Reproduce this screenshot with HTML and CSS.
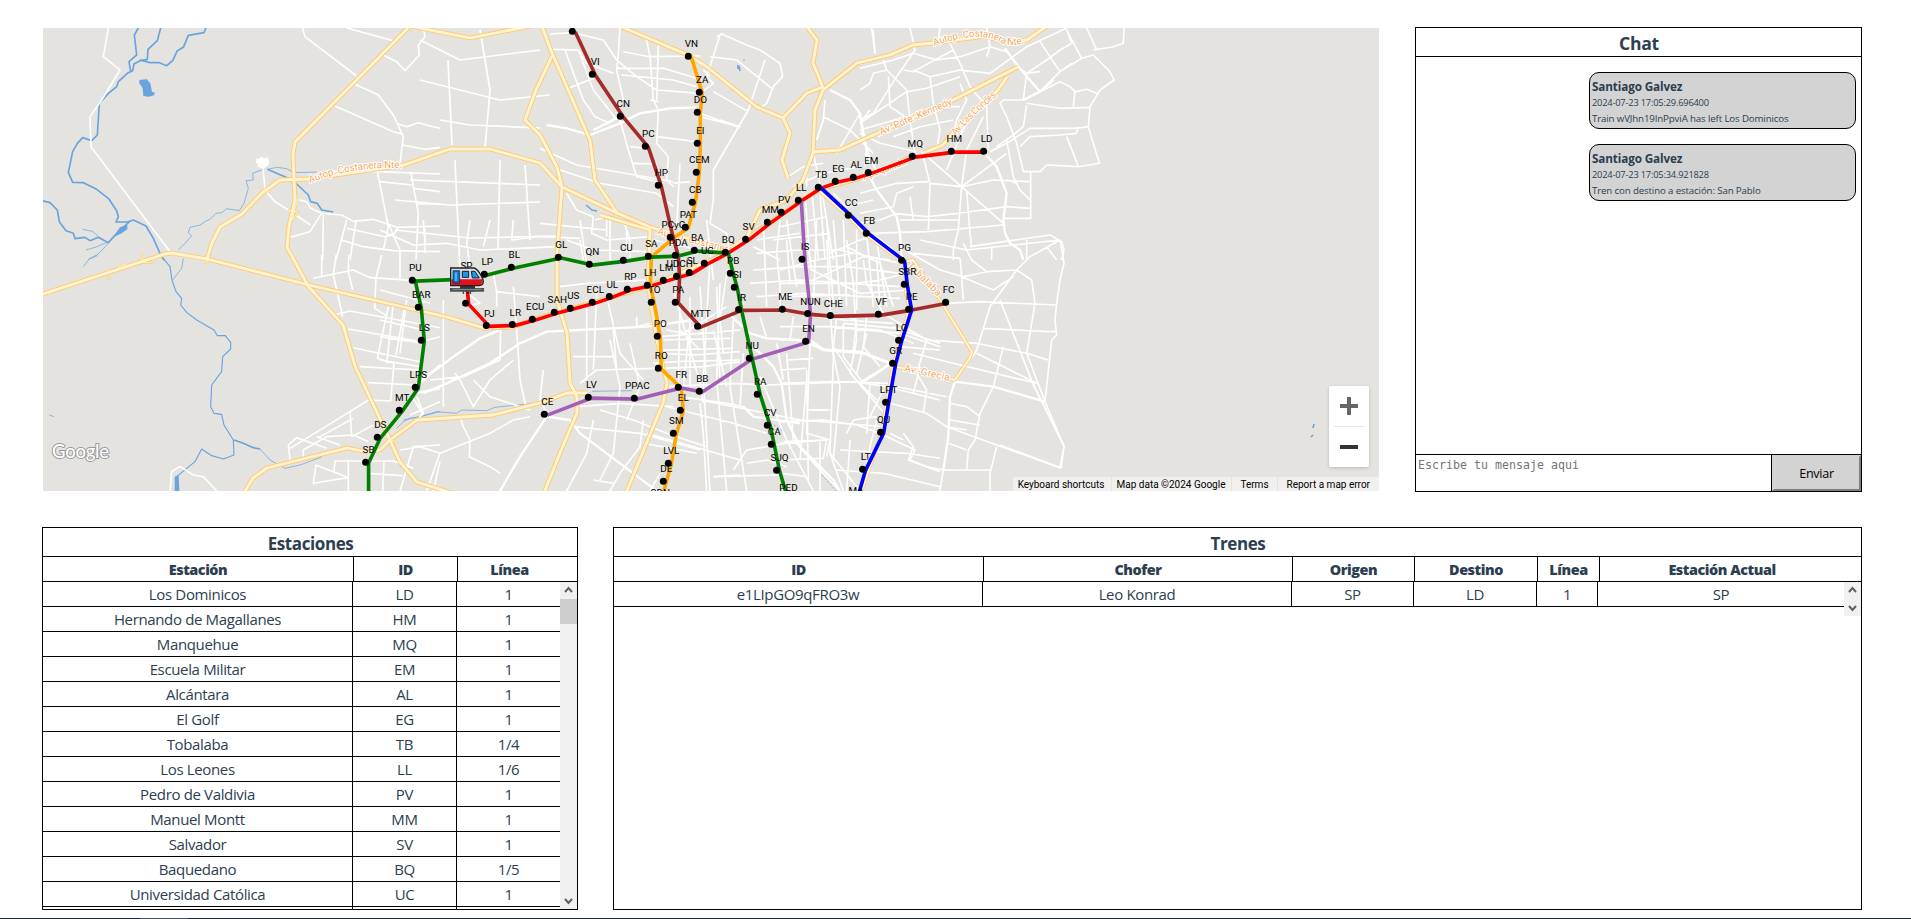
FILE: index.html
```html
<!DOCTYPE html>
<html lang="es">
<head>
<meta charset="utf-8">
<title>Metro</title>
<link rel="stylesheet" href="styles.css">
</head>
<body>
<main class="dashboard">
  <section class="top">
    <div class="map">
      <svg class="map-canvas" viewBox="43 28 1336 463" width="1336" height="463">
        <g class="water">
          <g transform="translate(40 20) scale(.33333)">
            <path class="w5" d="M295 24L283 45L290 105L267 125L272 155M362 24L352 62L324 88L322 118L300 122L282 132L278 152L262 160L235 185L230 200L205 220L178 250L172 345L155 362L128 353L112 370L98 395L85 457L98 487L130 488L170 508L205 535L230 572L235 590L228 606L262 606L280 600L318 618L340 655L362 705L372 720M498 24L492 38L445 46L430 82L412 92L398 122L380 137L358 128L330 128L300 120"/>
            <path class="w5" d="M0 540L30 548L52 570L58 605L78 632L100 640L105 656L135 652L150 662L175 652L205 668L235 635L268 606"/>
            <path d="M298 180L320 178L331 190L336 215L345 218L342 226L326 230L310 228L308 205L298 190ZM228 640L240 622L262 614L262 628L245 640L220 652Z" class="lake"/>
            <path class="w2" d="M128 628L158 634L175 650M138 690L165 682L200 668M145 718L175 702L205 670M682 448L710 442L740 446L762 458L830 456M670 448L638 460L640 480L618 482L625 505L612 550L598 572L560 566L545 578L528 580L510 598L500 602L478 616L450 622L445 638L455 648L435 670L415 690"/>
            <path class="w5" d="M682 448L745 475L770 492L805 525L812 545L832 550L845 570L880 576"/>
          </g>
          <g transform="translate(40 255) scale(.33333)">
            <path class="w4" d="M370 10L390 35L396 75L408 110L425 130L422 150L440 172L470 195L500 212L522 225L532 242L556 242L572 262L572 282L548 305L545 350L515 390L512 455L522 475L545 478L552 510L580 555L582 600L550 612L515 602L485 582L465 620L440 640L410 665"/>
            <path d="M404 665L416 660L418 708L404 708Z" class="lake"/>
            <path class="w5" d="M582 555L610 565L640 578L660 582"/>
            <path class="w2" d="M660 582L690 615L735 640L780 630L845 606M430 10L425 40L398 75M130 35L148 12L172 2M1070 520L1090 500L1110 490L1140 485L1200 470M28 480L42 485"/>
          </g>
          <g transform="translate(380 220) scale(.33333)">
            <path class="w2" d="M70 600L120 590L170 575L230 580L245 570L320 572L345 562L480 548M636 514L755 512"/>
          </g>
          <path class="w1" d="M774 425L784 432M822 475L836 491M744 59V61"/>
          <path class="speck" d="M1313 428L1314 424M1311 437L1313 435M738 65V69M739 66L740 71M586 205L592 210L597 211"/>
        </g>

        <g class="roads">
          <g transform="translate(40 20) scale(.33333)">
            <path d="M205 24L190 110L240 150L185 240L150 290L153 380L390 695M788 24L795 50L950 168M920 24L1060 62M1030 105L1070 125L1095 152L1138 105L1135 75L1155 50L1150 24M945 193L1015 225L1060 285L1090 350L1080 430M885 258L1060 335L1085 342M1075 312L1100 320L1135 308L1170 318L1200 325M1088 375L1155 388L1200 382M668 430L675 510L705 545L745 570L812 615"/>
            <path d="M860 455L1010 455L1200 462M1012 455L1045 620L1030 690M1112 455L1135 580L1128 720M1020 485L1115 495M1120 505L1200 515M1130 552L1200 552M770 538L800 545L812 565L845 580L810 635L750 652M845 580L905 585L940 604L1000 598L1070 622L1200 618M920 625L1035 650L1060 645L1075 622M905 660L970 680L1060 692L1200 695M920 600L888 720M948 604L930 720M850 585L848 720M1155 625V700"/>
            <path class="blob" d="M650 418L660 418L664 412L672 418L682 415L686 424L682 434L670 444L654 438L657 429L650 427Z"/>
          </g>
          <g transform="translate(40 255) scale(.33333)">
            <path d="M820 70L940 45L990 68L1120 76M845 0V65M888 0L880 60L908 185M926 0L925 50L938 105M1025 0L1008 70L1004 160L1040 182M890 178L930 168L1200 218M925 222L1145 260L1200 245M940 278L1140 320M1045 155L1012 310L1062 325L1052 438L985 435L930 470L750 580M1092 165L1068 300M960 335L1140 345M985 383L1125 390M930 470L935 545L1000 510M835 548L940 490M830 545L900 570M750 615L745 570L770 548L860 580M790 605V585L860 545L940 540L985 560M390 708L395 650L420 634L460 660L490 665L530 708M882 650L885 618L1060 618L1120 640M880 650L925 668L820 685L828 630L925 668M925 618V708M1032 618L1028 708M985 655L1088 662M1080 708L1120 575L1200 570M1180 708L1200 620M1120 430L1150 480M1110 480L1200 440"/>
            <path class="major" d="M1145 380L1200 330M1125 415L1200 400"/>
          </g>
          <g transform="translate(380 220) scale(.33333)">
            <path class="major" d="M100 500L220 410L300 355L360 330M130 520L200 490L330 430L420 370L500 335L800 320L940 300M360 813L420 710L500 590L570 600L600 640L800 790L830 813"/>
            <path d="M0 30L100 75L200 70L300 90L420 85L530 80M20 0L60 90V180M130 0L135 70M270 0L260 70L270 140M330 0L310 80M400 0L395 60L470 50L530 50M190 240V430L190 560M240 200L300 250L250 260M340 160L350 215L480 230M350 215V260M400 200L410 330L420 480L440 570M0 210L150 250M0 350L130 370M0 300L130 330M0 420L120 440M40 250L20 430M80 240L60 400M150 480L250 470L360 420L362 330M225 460L240 480L280 560L330 480L400 420M280 480L330 530L450 570M490 450L480 540L500 580M580 410L700 410M620 240V480M650 220L640 450M680 230L720 400L790 480M700 330L710 450M770 290V320L810 310M560 60L640 90L800 95M600 0L610 70L620 130M690 0V120M740 30V100M540 200L620 190L800 180M600 490L650 450L830 445M840 350L960 340L1080 330M850 400L940 405L1080 395M850 445L970 440L1080 425M590 560L720 550L880 560M110 530L130 580L110 600M240 590L250 620L270 660L268 710L330 740L360 760M60 690L120 680L180 700L140 813M180 700L330 640L400 600L450 590M580 620L780 640L960 690M640 600L620 700L560 813M790 600L780 680L720 760L690 813M960 550L970 640L980 813M880 210L960 490L970 550M900 330L960 390M1000 330L1040 500M980 0L1000 180M1040 160L1020 300L1030 400M930 230V500M960 200L980 500M1010 200L1020 490M640 780L700 790M1000 770L1080 765M800 640L1080 720M790 670L950 700"/>
          </g>
          <g transform="translate(540 20) scale(.33333)">
            <path class="major" d="M20 315L80 325L150 345L240 310L300 280L390 265L470 262M160 330L240 290M870 210L930 240L960 280L970 350L990 420L1010 450"/>
            <path d="M30 42L100 38L190 60L230 120L290 170L350 210L480 220M240 22L235 100L230 150L250 240M320 60L330 110L340 240L355 270L350 370L385 410L380 480L400 500M355 75L350 240M230 145L370 145L470 175M245 165L400 180L470 200M250 95L330 110L480 108M40 88L115 90L140 130L220 160M75 90L130 240L165 290L210 310M115 90L160 210L200 260L230 300M85 205L160 175M330 240L355 245M350 350L470 365M480 290L600 320L540 300M270 380L320 385M280 430L350 432M240 300L265 390L290 470L370 490M0 385L110 435L230 455L400 485M60 450L180 490L350 520L400 560M530 50L545 42L620 75L660 90L720 130L728 170L700 200L680 250L660 265M540 45L500 170L520 190L480 220M675 120L625 270L520 450V540L510 610L560 640L570 700M510 110L590 120L640 160L695 205M520 215L625 275M480 280L590 320M490 150L510 170M420 430L410 620M400 490L450 485M1000 30L1005 100M855 240L850 300L830 360M850 290L930 330L1000 400M960 280L890 400M990 270L960 310M1000 340L1020 350M160 590L155 640L200 660L330 650M200 590L165 600M200 600V650M10 650L120 655M0 610L150 625L200 630M120 660L130 720M80 520L110 570L160 590M250 600L270 660V720M340 660L480 690"/>
            <path d="M745 470L790 440L850 430M760 500L850 460L960 440M800 440V500M820 400L850 540L880 720M795 520L810 720M815 510L835 720M840 520L855 720M720 620L860 590M700 660L870 640M640 680L720 720M880 520L920 560L1000 540"/>
          </g>
          <g transform="translate(600 220) scale(.33333)">
            <path class="major" d="M385 280L450 340L500 355L600 360M600 360L650 380L670 390L790 400L870 430M870 430L830 460L790 485M460 380L520 440L545 490L560 600L600 680L700 780L720 813M430 560L460 590L600 610"/>
            <path d="M160 430L230 425L420 420M200 330L250 340L380 260M190 360L390 355M190 390L400 385M240 250L235 500M270 310L250 500M330 120L320 290L310 480L330 813M360 190L350 480L380 813M400 300L390 500L440 813M430 400L420 560M200 500L400 490L500 495L760 485L860 500M240 530L380 550L430 560M300 540L600 600L850 620M480 470L560 660L640 813M530 370L550 480M630 370L620 640L690 660L680 710M560 420L640 415M620 480L600 720M700 720L720 500L700 400M680 660L550 665M620 570H680M710 290L700 380L760 470L870 600M740 290L770 300L760 390M800 290L790 380L840 440M690 320L900 340L1020 380M650 290L730 300L880 310M480 290L500 355M580 290L570 360M540 280V200L530 100L540 0M560 0L590 200M490 0L500 260M470 60L600 40M470 100L600 90L720 90L900 130M460 150L600 140L740 140L900 160M450 190L600 180L740 190L900 200M470 230L610 220L900 235M650 0L640 260M680 0L700 250M700 0L720 250M730 0L740 260M770 0L770 270M800 40L820 260M830 60L860 260M690 100L780 60L840 40M740 80L840 130L880 260M400 750L440 690L560 670M340 770L540 765M440 730L500 720L560 740M200 560L400 610L500 640M0 570L100 600L200 640L320 680M30 360L60 500L40 700L0 780M90 370L120 500L80 600M150 813L180 760M860 500L1020 540M830 600L810 680L800 740L780 760M740 640L760 600L830 590M690 700L780 813M720 690L920 700L1020 715M810 590L850 510M910 640L940 680L925 720L1020 755M870 640L910 660M960 440L940 520M880 320L960 350L1020 370M900 380L1020 390"/>
          </g>
          <g transform="translate(860 20) scale(.33333)">
            <path class="major" d="M20 450L50 510L110 590L120 640L125 720M0 280L10 340L20 390L15 440M370 395L410 440L440 520L430 600L435 640L450 670L480 690L490 720M490 240L540 215L580 180M435 85L475 140L540 215"/>
            <path d="M0 145L100 120L160 100L230 120L300 110L390 80L440 95M35 24L45 100M150 24L165 90L110 170L40 280L0 300M240 24L235 60M160 150L210 170L300 150L390 160L500 80L620 24M0 210L30 190L40 160L80 150M70 120L80 150L140 210L150 300L165 400M85 170L90 260L150 300M130 150L160 155L280 90L300 130L330 200L380 260L385 390M210 170L220 250L240 330L230 390M0 310L140 215L200 205L300 170M0 330L240 260L300 260M100 350L180 320L280 300M0 340L60 370L170 395M300 190L320 240L290 300L280 340M280 90L270 70L290 50M380 24L390 80L380 110M540 65L600 155L635 130M500 160L560 120L600 90L635 70L620 30L665 115L700 105L750 155L762 180L720 210L690 260L685 320L718 430L655 440L560 435L540 455L490 455L470 370L440 290L420 250L430 240L490 240L500 160L475 140M500 160L540 155M665 115L600 155L540 215L600 185L630 200L645 215L640 260M500 250L600 265L690 262M645 215L680 208L715 222M500 255L490 320L460 345L410 380M685 320L650 325L510 325L440 370L390 395M480 380L510 350L600 345L650 340L655 320M620 350L640 400L655 440M680 24L710 90M700 90L760 80L790 70L792 24M370 290L320 390L305 500M260 450L300 350L340 270M185 390L210 490L205 630M190 400L305 500L440 400M210 490L305 500L400 480L510 485M305 500L430 610M305 500L295 630L280 690L280 720M320 510L330 640L335 680M0 520L110 490L205 485M0 580L100 560L110 520L160 500M100 580L200 590L295 580L440 560L510 565M120 600L300 600M25 640L200 635L430 615M435 595H512V455L490 455M440 360L460 470L480 510L510 540M440 480L470 490M150 530L160 600M0 610L60 600L110 580M330 680L570 645L605 665L612 690L605 720M395 680V720M0 660L50 650L100 690M500 660V720"/>
          </g>
          <g transform="translate(780 240) scale(.33333)">
            <path class="major" d="M525 425L510 470L505 590L490 690M525 425L640 440L795 485M90 300L130 328L240 335L335 370L245 425"/>
            <path d="M360 0L362 40M420 0L560 30L840 0M375 30L480 90L550 110L620 95L710 90L750 50L840 0M400 40L540 55L545 110L640 150L700 110M545 110L550 180M500 190L600 185L830 195M550 10L575 60L620 95M710 90L630 200L610 265L590 330L570 360M710 90L755 120L765 190L740 340M800 20L830 60M840 0L852 70L840 120L830 190L825 240L830 285L815 300L795 485L852 620L840 683L650 615L500 560M610 265L800 275L830 275M390 270L440 300L590 310L640 320L740 340L805 360M670 320L640 440L600 520L585 600L565 630L560 690M590 340L770 430M400 340L520 370L770 430M440 300L410 400L440 450L430 520M350 440L400 450L500 470M330 490L440 520L500 560L560 570M510 490L560 500L600 530M510 540L600 555M505 610L560 630M650 620L630 700V753M490 690L630 690M310 585L405 630L390 660L440 680L490 690L480 753M740 340L795 485M170 690L310 700L480 740M0 430L150 425L335 430M0 545L130 540L230 555L300 580M140 0L150 200L160 350L150 640L190 753M80 0L95 90L240 160L390 150M20 0L30 130L100 120L250 50L330 60M0 90L110 60L220 40M0 130L230 130L300 120L380 100M0 170L210 165M200 0L220 130L230 300L210 400L290 480M0 260L150 260L300 270L400 310M0 300L80 300M190 250V350L250 430M260 280L230 400M250 60L260 130L310 220L390 270M290 50L300 200M0 390L80 385M90 510H150M80 390L85 720M20 340L40 600L120 690L180 753M0 660L130 655L140 600L0 610M0 700L80 710M120 600V753M270 430L260 580M210 600L200 753M190 250L350 265"/>
          </g>
          <path d="M1000 300L1033 384L1064 446L1061 468L1000 445"/>
          <path d="M395 200L450 205L540 202M395 230L470 238L560 236M440 120L470 125L540 128M448 60L452 145M480 30L490 90L485 148M420 40L460 60L540 50M420 80L500 100L550 95M455 160L460 270M500 160L498 250M525 165L530 240M410 180L540 185"/>
        </g>

        <g class="highways" id="highways">
          <path d="M410 26L295 142L293 155L295 200L289 226L287 247L308 286L343 325L355 366L390 440L400 462L417 482L452 493"/>
          <path d="M40 295L165 254L172 253L207 259L313 286L447 317L484 328L513 327L532 320L647 287L725 254L798 203L818 190L868 176L912 157"/>
          <path d="M207 259L212 243L220 227L242 214L262 193L280 180L307 179L404 165L450 149L490 149L540 163L562 187L617 213L650 227L687 238L727 250L747 237L760 210L787 200L803 180L813 153L815 110L823 90L857 63L890 55L913 45L933 43L985 36L1007 43L1027 40L1047 26"/>
          <path d="M541 24L552 53L590 140L595 180L617 213M552 56L536 90L525 120L540 135L557 167L562 187L557 253L557 300L567 333L570 383L577 397L577 413L560 453L544 493M410 26L470 38L541 24"/>
          <path d="M244 493L253 478L267 468L347 448L367 452L380 450L390 440L417 420L493 415L540 403L567 393L587 393"/>
          <path d="M600 215L650 230L648 285L657 340L663 367L667 383L663 403L626 493"/>
          <path d="M622 27L688 55L707 67L757 107L783 118L790 133L782 160L788 178M783 118L807 93L823 87M807 27L817 40L813 63L820 80L823 88"/>
          <path d="M813 152L840 150L880 132L953 100L1018 67M923 153L943 145L953 133L998 90L1007 77"/>
          <path d="M816 188L848 216L866 235L903 262L913 260L940 300L972 352L970 358L955 380L893 366M905 285L909 309L893 366L881 434L861 493" class="avenue"/>
          <path d="M142 253V262L150 263L158 256M207 259V266M107 276L110 280M118 267L126 264" class="ramp"/>
          <path d="M288 210L298 212L292 220L298 198M305 282L314 292M385 436L398 444M262 188L270 192" class="ramp"/>
        </g>

        <g class="road-names">
          <path id="r1" d="M310 183Q350 166 404 168"/>
          <path id="r2" d="M934 46Q978 30 1000 42Q1010 48 1028 42"/>
          <path id="r3" d="M881 135L955 103"/>
          <path id="r4" d="M956 136Q970 118 1000 93"/>
          <path id="r5" d="M907 266L938 297"/>
          <path id="r6" d="M904 371L950 381"/>
          <path id="r7" d="M657 234Q690 243 735 254"/>
          <path id="r8" d="M864 180L910 163"/>
          <text><textPath href="#r1" textLength="94">Autop. Costanera Nte.</textPath></text>
          <text><textPath href="#r2" textLength="93">Autop. Costanera Nte.</textPath></text>
          <text><textPath href="#r3" textLength="78">Av. Pdte. Kennedy</textPath></text>
          <text><textPath href="#r4" textLength="58">Av. Las Condes</textPath></text>
          <text><textPath href="#r5" textLength="43">Tobalaba</textPath></text>
          <text><textPath href="#r6" textLength="46">Av.-Grecia</textPath></text>
          <text><textPath href="#r7" textLength="78">Autop. Costanera</textPath></text>
          <text><textPath href="#r8" textLength="46">Apoquindo</textPath></text>
        </g>

        <g class="lines" id="lines" transform="translate(3 .8)"></g>
        <g class="stations" id="stations"></g>

        <g class="train" transform="translate(380 220) scale(.33333)">
          <path d="M210 204H312V215H210Z" fill="#4c5458"/>
          <path d="M218 208H304" stroke="#8a9296" stroke-width="3"/>
          <path d="M240 196H285V206H240Z" fill="#333"/>
          <path d="M212 144H282Q292 145 305 170Q312 182 309 190Q305 197 292 197H212Z" fill="#d9dde0" stroke="#222" stroke-width="4"/>
          <path d="M214 178H307Q309 187 303 195H214Z" fill="#e0101c"/>
          <path d="M219 152H239V189H219Z" fill="#0a6fc2" stroke="#112244" stroke-width="2"/>
          <path d="M224 157H232V183H224Z" fill="#43b5f5"/>
          <path d="M247 154H266V172H247ZM274 154H285L298 174H277Z" fill="#1e97e8" stroke="#112233" stroke-width="3"/>
        </g>
        <text class="brand" x="52" y="458" textLength="57">Google</text>
      </svg>
      <div class="zoom-control">
        <button class="zoom-btn" aria-label="Acercar"><svg width="18" height="18"><path d="M7 0h4v7h7v4h-7v7H7v-7H0V7h7z" fill="#666"/></svg></button>
        <hr class="zoom-sep">
        <button class="zoom-btn" aria-label="Alejar"><svg width="18" height="18"><path d="M0 7h18v4H0z" fill="#333"/></svg></button>
      </div>
      <div class="map-legal">
        <span class="legal l1">Keyboard shortcuts</span><span class="legal l2">Map data ©2024 Google</span><span class="legal l3">Terms</span><span class="legal l4">Report a map error</span>
      </div>
    </div>

    <section class="panel chat">
      <h2 class="panel-title">Chat</h2>
      <div class="messages">
        <article class="message">
          <h3 class="author">Santiago Galvez</h3>
          <p class="stamp">2024-07-23 17:05:29.696400</p>
          <p class="text">Train wVJhn19InPpviA has left Los Dominicos</p>
        </article>
        <article class="message">
          <h3 class="author">Santiago Galvez</h3>
          <p class="stamp">2024-07-23 17:05:34.921828</p>
          <p class="text">Tren con destino a estación: San Pablo</p>
        </article>
      </div>
      <form class="composer">
        <textarea class="composer-input" placeholder="Escribe tu mensaje aqui"></textarea>
        <button class="send" type="button">Enviar</button>
      </form>
    </section>
  </section>

  <section class="bottom">
    <section class="panel stations-panel">
      <h2 class="panel-title">Estaciones</h2>
      <div class="row head st-head"><b>Estación</b><b>ID</b><b>Línea</b></div>
      <div class="scroll">
        <div class="rows">
          <div class="row st"><span>Los Dominicos</span><span>LD</span><span>1</span></div>
          <div class="row st"><span>Hernando de Magallanes</span><span>HM</span><span>1</span></div>
          <div class="row st"><span>Manquehue</span><span>MQ</span><span>1</span></div>
          <div class="row st"><span>Escuela Militar</span><span>EM</span><span>1</span></div>
          <div class="row st"><span>Alcántara</span><span>AL</span><span>1</span></div>
          <div class="row st"><span>El Golf</span><span>EG</span><span>1</span></div>
          <div class="row st"><span>Tobalaba</span><span>TB</span><span>1/4</span></div>
          <div class="row st"><span>Los Leones</span><span>LL</span><span>1/6</span></div>
          <div class="row st"><span>Pedro de Valdivia</span><span>PV</span><span>1</span></div>
          <div class="row st"><span>Manuel Montt</span><span>MM</span><span>1</span></div>
          <div class="row st"><span>Salvador</span><span>SV</span><span>1</span></div>
          <div class="row st"><span>Baquedano</span><span>BQ</span><span>1/5</span></div>
          <div class="row st"><span>Universidad Católica</span><span>UC</span><span>1</span></div>
          <div class="row st"><span></span><span></span><span></span></div>
        </div>
        <div class="bar">
          <svg width="17" height="17"><path d="M5 10l3.500-4 3.500 4" class="chev"/></svg>
          <div class="thumb"></div>
          <svg class="down" width="17" height="17"><path d="M5 7l3.500 4 3.500-4" class="chev"/></svg>
        </div>
      </div>
    </section>

    <section class="panel trains-panel">
      <h2 class="panel-title">Trenes</h2>
      <div class="row head tr-head"><b>ID</b><b>Chofer</b><b>Origen</b><b>Destino</b><b>Línea</b><b>Estación Actual</b></div>
      <div class="scroll short">
        <div class="rows">
          <div class="row tr"><span>e1LIpGO9qFRO3w</span><span>Leo Konrad</span><span>SP</span><span>LD</span><span>1</span><span>SP</span></div>
        </div>
        <div class="bar">
          <svg width="17" height="17"><path d="M5 10l3.500-4 3.500 4" class="chev"/></svg>
          <svg class="down" width="17" height="17"><path d="M5 7l3.500 4 3.500-4" class="chev"/></svg>
        </div>
      </div>
    </section>
  </section>
</main>
<footer class="strip"></footer>
<script src="map.js"></script>
</body>
</html>
```
FILE: map.js
```js
// Station code -> pixel position on the map canvas.
const stations = {
  LC: [572.3, 31.3], VI: [592.3, 74.3], CN: [620.3, 116.3], PC: [645.3, 146.3], HP: [658.3, 185.3], PCyC: [670.3, 237.3],
  VN: [688.3, 56.3], ZA: [699.3, 92.3], DO: [697.3, 112.3], EI: [697.3, 143.3], CEM: [696.3, 172.3], CB: [692.3, 202.3],
  PAT: [685.3, 227.3], SA: [648.3, 256.3], LH: [647.3, 285.3], TO: [651.3, 302.3], PO: [657.3, 336.3], RO: [658.3, 368.3],
  FR: [678.3, 387.3], EL: [680.3, 410.3], SM: [673.3, 433.3], LVL: [668.3, 463.3], DE: [663.3, 481.3], CDN: [657, 505],
  PDA: [675.3, 255.3], UDCH: [676.6, 276.3], PA: [675.3, 302.3], MTT: [697.6, 326.3], IR: [738.6, 309.6], ME: [782.3, 309.3],
  NUN: [807.6, 313.6], CHE: [830.3, 315.6], VF: [878.3, 314.3], PE: [908.6, 309.3], FC: [945.6, 302.3],
  SP: [463.5, 278.3], NP: [465.6, 303.3], PJ: [486.3, 325.6], LR: [512.3, 324.6], ECU: [532.3, 319.3], SAH: [554.3, 312.3],
  US: [570.3, 308.3], ECL: [592.3, 302.3], UL: [609.3, 296.6], RP: [627.3, 289.3], LM: [663.3, 280.3], SL: [689.3, 272.6],
  UC: [704.3, 263.3], BQ: [725.3, 252.3], SV: [745.6, 239.3], MM: [767.3, 222.3], PV: [781.3, 212.3], LL: [798.3, 200.3],
  TB: [818.3, 187.3], EG: [835.3, 181.3], AL: [853.3, 177.3], EM: [868.3, 172.6], MQ: [912.3, 156.3], HM: [951.3, 151.3], LD: [983.6, 151.3],
  SB: [365.6, 462.3], DS: [377.3, 437.3], MT: [399.3, 410.3], LPS: [415.3, 387.3], LS: [421.3, 340.3], BAR: [418.3, 307.3], PU: [412.3, 280.3],
  LP: [484.3, 274.3], BL: [511.3, 267.3], GL: [558.3, 257.3], QN: [589.3, 264.3], CU: [623.3, 260.3], BA: [694.3, 250.3],
  PB: [730.3, 273.3], SI: [734.3, 287.3], NU: [749.3, 358.3], RA: [757.3, 394.3], CV: [767.3, 425.3], CA: [771.3, 444.3], SJQ: [776.6, 470.3], PED: [785.5, 500],
  CE: [544.3, 414.3], LV: [588.3, 397.3], PPAC: [634.3, 398.3], BB: [699.3, 391.3], EN: [805.6, 341.3], IS: [802, 259.3],
  CC: [848.3, 215.3], FB: [866.3, 233.3], PG: [901.6, 260.3], SBR: [904.3, 284.3], LO: [898.6, 340.3], GR: [892.6, 363.3],
  LPT: [885.6, 402.3], QU: [880.6, 432.3], LT: [862.6, 469.3], MA: [853, 502.5]
};

const lines = [
  ['red', 'SP NP PJ LR ECU SAH US ECL UL RP LH LM UDCH SL UC BQ SV MM PV LL TB EG AL EM MQ HM LD'],
  ['orange', 'VN ZA DO EI CEM CB PAT PCyC SA LH TO PO RO FR EL SM LVL DE CDN'],
  ['#a25fb8', 'CE LV PPAC FR BB NU EN NUN IS LL'],
  ['brown', 'LC VI CN PC HP PCyC PDA UDCH PA MTT IR ME NUN CHE VF PE FC'],
  ['blue', 'TB CC FB PG SBR PE LO GR LPT QU LT MA'],
  ['green', 'SB DS MT LPS LS BAR PU SP LP BL GL QN CU SA PDA BA BQ PB SI IR NU RA CV CA SJQ PED']
];

const NS = 'http://www.w3.org/2000/svg';
function add(parent, tag, attrs, text) {
  const el = document.createElementNS(NS, tag);
  for (const k in attrs) el.setAttribute(k, attrs[k]);
  if (text) el.textContent = text;
  parent.appendChild(el);
}

// Highways are cased: a wide amber stroke under a thin cream one.
const highways = document.getElementById('highways');
[...highways.querySelectorAll('path')].forEach(p => {
  const fill = p.cloneNode();
  fill.classList.add('inner');
  highways.appendChild(fill);
});

const lineLayer = document.getElementById('lines');
lines.forEach(([color, codes]) => {
  const points = codes.split(' ').map(c => stations[c].join()).join(' ');
  add(lineLayer, 'polyline', { points: color === 'green' ? '365.6,500 ' + points : points, stroke: color });
});

const layer = document.getElementById('stations');
for (const code in stations) {
  const [x, y] = stations[code];
  add(layer, 'circle', { cx: x, cy: y, r: 3.5 });
}
// The first stop of the brown line sits at the top edge, where its label has no room.
for (const code in stations) {
  if (code === 'LC') continue;
  const [x, y] = stations[code];
  add(layer, 'text', { x: x + 3, y: y - 9 }, code);
}
```
FILE: styles.css
```css
* { box-sizing: border-box; }
body {
  margin: 0;
  height: 919px;
  overflow: hidden;
  display: flex;
  flex-direction: column;
  background: #fff;
  color: #2c3e50;
  font-family: "Open Sans", "Noto Sans", sans-serif;
}
h2, h3, p { margin: 0; }
.dashboard { flex: 1; padding: 27px 49px 0 42px; display: flex; flex-direction: column; gap: 35px; min-height: 0; }
.top { display: flex; justify-content: space-between; height: 465px; }
.bottom { display: flex; gap: 35px; height: 383px; }

/* Map */
.map { position: relative; width: 1336px; height: 463px; margin: 1px 0 0 1px; background: #e4e3df; overflow: hidden; }
.map-canvas { display: block; }
.water path { fill: none; stroke: #69a4df; stroke-linejoin: round; }
.water .lake { fill: #69a4df; stroke: none; }
.water .w5 { stroke-width: 5; }
.water .w4 { stroke-width: 3.4; }
.water .w2 { stroke-width: 2.2; }
.water .w1 { stroke-width: .8; stroke-dasharray: 2 2; }
.water .speck { stroke-width: 1.6; }
.roads path { fill: none; stroke: #fff; stroke-width: 4.8; stroke-linejoin: round; }
.roads > path { stroke-width: 1.7; }
.roads .major { stroke-width: 7; }
.roads .blob { fill: #fff; }
.highways path { fill: none; stroke: #fccd72; stroke-width: 4.8; stroke-linejoin: round; }
.highways .inner { stroke: #fff3d4; stroke-width: 2.8; }
.highways .avenue { stroke-width: 3.6; }
.highways .avenue.inner { stroke-width: 2; }
.highways .ramp { stroke-width: 2.4; }
.highways .ramp.inner { stroke-width: 1; }
.road-names path { fill: none; }
.road-names text { font: 9.8px Roboto, sans-serif; fill: #f3a95f; stroke: #fff; stroke-width: 2px; paint-order: stroke; }
.lines polyline { fill: none; stroke-width: 3.6; stroke-linejoin: round; }
.stations text { font: 9.9px Roboto, sans-serif; text-anchor: middle; fill: #000; }
.brand { font: 500 18.5px Lato, sans-serif; fill: #fff; stroke: #999; stroke-width: 2px; paint-order: stroke; }
.zoom-control {
  position: absolute; right: 10px; top: 358px; width: 40px; height: 81px;
  background: #fff; border-radius: 2px; box-shadow: 0 1px 4px -1px rgba(0,0,0,.3);
  display: flex; flex-direction: column; align-items: center;
}
.zoom-btn { width: 40px; height: 40px; padding: 0; border: 0; background: none; display: grid; place-items: center; }
.zoom-sep { width: 30px; height: 1px; margin: 0; border: 0; background: #e6e6e6; }
.map-legal { position: absolute; right: 0; bottom: 0; height: 14px; display: flex; gap: 1px; }
.legal { background: #f1f0ee; color: #000; font: 10px/15px Roboto, sans-serif; text-align: center; white-space: nowrap; }
.l1 { width: 98px; padding-right: 2px; }
.l2 { width: 119px; padding-right: 1px; }
.l3 { width: 45px; }
.l4 { width: 101px; padding-right: 9px; text-align: right; }

/* Panels */
.panel { border: 1px solid #000; display: flex; flex-direction: column; }
.panel-title { height: 29px; flex: none; border-bottom: 1px solid #000; text-align: center; font-size: 17px; line-height: 31px; font-weight: 700; letter-spacing: -.4px; padding-left: 1px; }

.chat { width: 447px; }
.chat .panel-title { font-size: 17.6px; letter-spacing: -.3px; }
.messages { flex: 1; padding: 15px 5px 0 0; display: flex; flex-direction: column; align-items: flex-end; gap: 15px; }
.message { width: 267px; height: 57px; border: 1px solid #000; border-radius: 10px; background: #d3d3d3; padding: 4px 2px 0; }
.author { font-size: 11.7px; line-height: 18px; font-weight: 700; letter-spacing: -.12px; }
.stamp, .text { font-size: 9.7px; line-height: 16px; letter-spacing: -.13px; white-space: nowrap; }
.stamp { font-size: 9.3px; letter-spacing: -.2px; }
.composer { display: flex; height: 37px; border-top: 1px solid #000; }
.composer-input { flex: 1; border: 0; border-right: 1px solid #000; padding: 3px 2px; resize: none; outline: 0; font: 11.63px/15px "DejaVu Sans Mono", monospace; }
.composer-input::placeholder { color: #757575; }
.send { width: 89px; border: 2px outset #d3d3d3; background: #d3d3d3; color: #000; font: 12.6px "Open Sans", sans-serif; letter-spacing: -.3px; }

.stations-panel { width: 536px; }
.trains-panel { width: 1249px; }
.row { display: grid; height: 25px; border-bottom: 1px solid #000; text-align: center; font-size: 15px; line-height: 25px; letter-spacing: -.35px; }
.row > :not(:last-child) { border-right: 1px solid #000; }
.row > * { min-width: 0; white-space: nowrap; }
.row.head { flex: none; font-weight: 700; font-size: 14.4px; letter-spacing: -.45px; }
.st-head { grid-template-columns: 311px 104px 103px; }
.st { grid-template-columns: 310px 104px 103px; }
.tr-head { grid-template-columns: 370px 309px 122px 123px 62px 244px; }
.tr { grid-template-columns: 369px 309px 122px 123px 61px 246px; }
.scroll { flex: 1; min-height: 0; display: flex; overflow: hidden; }
.scroll.short { flex: none; height: 34px; }
.rows { flex: 1; }
.bar { width: 17px; flex: none; background: #f0f0f0; display: flex; flex-direction: column; overflow: hidden; }
.bar svg { flex: none; }
.thumb { height: 25px; background: #cdcdcd; }
.down { margin-top: auto; }
.chev { fill: none; stroke: #606060; stroke-width: 2; }

.strip { height: 1px; flex: none; background: linear-gradient(90deg, #1c2733 140px, #48525c 140px 188px, #1c2733 188px); }
```
